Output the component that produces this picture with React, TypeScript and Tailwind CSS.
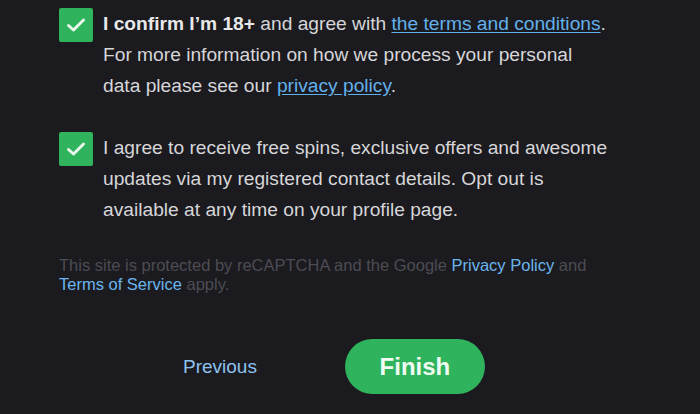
export default function App() {
  const Check = () => (
    <div className="w-[34px] h-[34px] shrink-0 bg-[#2fb35c] rounded-[2px] flex items-center justify-center">
      <svg width="20" height="16" viewBox="0 0 20 16" fill="none">
        <path d="M2.5 8.5 L7.5 13 L17.5 3" stroke="#e8f7ec" strokeWidth="3" strokeLinecap="round" strokeLinejoin="round" />
      </svg>
    </div>
  );

  return (
    <div className="w-[700px] h-[414px] bg-[#1b1a1f] overflow-hidden font-['Liberation_Sans',Arial,sans-serif] text-[#d6d6d8]">
      <div className="pl-[59px] pt-[8px] pr-[40px]">
        <div className="flex gap-[10px] mb-[31px]">
          <Check />
          <p className="text-[19.2px] leading-[31px] w-[506px]">
            <b className="text-[#e8e8ea]">I confirm I’m 18+</b> and agree with{' '}
            <a className="text-[#62b1ec] underline underline-offset-2">the terms and conditions</a>.
            For more information on how we process your personal data please see our{' '}
            <a className="text-[#62b1ec] underline underline-offset-2">privacy policy</a>.
          </p>
        </div>
        <div className="flex gap-[10px] mb-[31px]">
          <Check />
          <p className="text-[19.2px] leading-[31px] w-[506px]">
            I agree to receive free spins, exclusive offers and awesome updates via my registered contact details. Opt out is available at any time on your profile page.
          </p>
        </div>
        <p className="text-[16.5px] leading-[19px] text-[#4c4c53] w-[560px] mt-[1px]">
          This site is protected by reCAPTCHA and the Google <a className="text-[#6ab6ee]">Privacy Policy</a> and{' '}
          <a className="text-[#6ab6ee]">Terms of Service</a> apply.
        </p>
      </div>
      <div className="flex items-center mt-[45px] pl-[183px] gap-[88px]">
        <button className="text-[19px] text-[#8ec2f0] leading-none">Previous</button>
        <button className="w-[140px] h-[55px] rounded-full bg-[#2fb35c] text-[24px] font-bold text-[#f0fbf2]">
          Finish
        </button>
      </div>
    </div>
  );
}
